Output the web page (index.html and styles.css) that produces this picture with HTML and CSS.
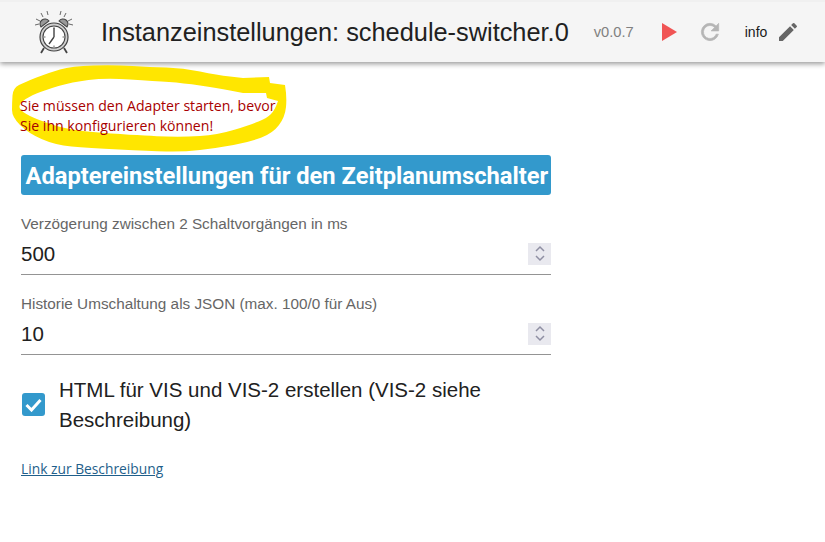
FILE: index.html
```html
<!DOCTYPE html>
<html lang="de">
<head>
    <meta charset="UTF-8">
    <title>Instanzeinstellungen: schedule-switcher.0</title>
    <link rel="stylesheet" href="styles.css">
</head>
<body>
    <header class="toolbar">
        <svg class="logo" width="40" height="44" viewBox="0 0 40 44" fill="none" stroke="#444" stroke-width="1.1">
            <path d="M2 9l4 2M7 3l2 4M13 1l1 4M27 1l-1 4M32 3l-2 4M38 9l-4 2M1 15l4-1M39 15l-4-1" stroke-width="0.8"/>
            <path d="M7 17a5 5 0 0 1 8-6zM33 17a5 5 0 0 0-8-6z" fill="#999"/>
            <circle cx="20" cy="27" r="14" fill="#d0d0d0" stroke-width="1.2"/>
            <circle cx="20" cy="27" r="11" fill="#fff"/>
            <path d="M20 27V18M20 27l-5 7" stroke-width="1.4"/>
            <path d="M20 17v1.500M20 35.500V37M10 27h1.500M28.500 27H30" stroke-width="0.8"/>
            <path d="M10 38l-3 5M30 38l3 5" stroke-width="1.8"/>
        </svg>
        <h1 class="title">Instanzeinstellungen: schedule-switcher.0</h1>
        <span class="version">v0.0.7</span>
        <svg class="icon-play" width="15" height="18" viewBox="0 0 15 18"><path d="M0 0l15 9-15 9z" fill="#f05454"/></svg>
        <svg class="icon-reload" width="26" height="26" viewBox="0 0 24 24"><path d="M17.650 6.350A7.960 7.960 0 0 0 12 4a8 8 0 1 0 7.740 10h-2.080A6 6 0 1 1 12 6c1.660 0 3.140.69 4.220 1.780L13 11h7V4z" fill="#b5b5b5" stroke="#b5b5b5" stroke-width="0.6"/></svg>
        <span class="info">info</span>
        <svg class="icon-edit" width="24" height="24" viewBox="0 0 24 24"><path d="M3 17.250V21h3.750L17.810 9.940l-3.750-3.750zM20.710 7.040a1 1 0 0 0 0-1.410l-2.340-2.340a1 1 0 0 0-1.410 0l-1.830 1.830 3.750 3.750z" fill="#666"/></svg>
    </header>

    <svg class="scribble" width="300" height="160" viewBox="0 0 300 160">
        <path fill="#ffe600" fill-rule="evenodd" d="M270 83L285 85Q287 97 286 107Q285 117 279 125Q273 133 261.500 137.500Q250 142 233.500 145Q217 148 200 150Q183 152 166 151.500Q150 151 119 149.500Q88 148 71.500 146.500Q55 145 41.500 139Q28 133 20 125Q12 117 12 110Q12 103 12.500 95.500Q13 88 19 85Q25 82 36.500 77.500Q48 73 60 69.500Q72 66 93.500 65.500Q115 65 132.500 66Q150 67 166.500 67.500Q183 68 200 71.500Q217 75 230 76.500L243 78L269 77ZM266 93L267 98L278 101Q275 110 271 114Q267 118 258.500 121.500Q250 125 233.500 130Q217 135 200 136Q183 137 166.500 136.500Q150 136 111 133.500Q72 131 55 125.500Q38 120 30 116Q22 112 20 108.500Q18 105 23 101Q28 97 36.500 93.500Q45 90 58.500 86Q72 82 88.500 80Q105 78 130 79.500Q155 81 169 82Q183 83 200 85.500Q217 88 230 90.500L243 93Z"/>
    </svg>

    <main class="content">
        <p class="warning">Sie müssen den Adapter starten, bevor<br>Sie ihn konfigurieren können!</p>

        <h2 class="banner">Adaptereinstellungen für den Zeitplanumschalter</h2>

        <div class="field">
            <label class="field-label">Verzögerung zwischen 2 Schaltvorgängen in ms</label>
            <div class="field-input">
                <span>500</span>
                <span class="spinner">
                    <svg width="10" height="17" viewBox="0 0 10 17" fill="none" stroke="#8f8fa3" stroke-width="1.500"><path d="M1 6l4-4 4 4M1 11l4 4 4-4"/></svg>
                </span>
            </div>
        </div>

        <div class="field">
            <label class="field-label">Historie Umschaltung als JSON (max. 100/0 für Aus)</label>
            <div class="field-input">
                <span>10</span>
                <span class="spinner">
                    <svg width="10" height="17" viewBox="0 0 10 17" fill="none" stroke="#8f8fa3" stroke-width="1.500"><path d="M1 6l4-4 4 4M1 11l4 4 4-4"/></svg>
                </span>
            </div>
        </div>

        <div class="check-row">
            <span class="checkbox">
                <svg width="17" height="14" viewBox="0 0 17 14" fill="none" stroke="#fff" stroke-width="3"><path d="M1.500 7l5 5 9-10"/></svg>
            </span>
            <span class="check-label">HTML für VIS und VIS-2 erstellen (VIS-2 siehe Beschreibung)</span>
        </div>

        <a class="doc-link" href="#">Link zur Beschreibung</a>
    </main>
</body>
</html>
```

FILE: styles.css
```css
body {
    margin: 0;
    background: #fff;
    font-family: "Liberation Sans", Arial, sans-serif;
    color: #212121;
    overflow: hidden;
}
.toolbar {
    display: flex;
    align-items: center;
    height: 62px;
    box-sizing: border-box;
    padding-left: 34px;
    background: #f5f5f5;
    border-top: 2px solid #f0f0f0;
    box-shadow: 0 2px 5px rgba(0,0,0,0.4);
}
.logo {
    flex: none;
}
.title {
    margin: 0 0 0 27px;
    font-size: 25.350px;
    font-weight: 400;
    white-space: nowrap;
}
.version {
    margin-left: 25px;
    font-size: 14.700px;
    color: #808080;
}
.icon-play {
    margin-left: 28px;
}
.icon-reload {
    margin-left: 20px;
}
.info {
    margin-left: 22px;
    font-size: 14px;
    color: #1a1a1a;
}
.icon-edit {
    margin-left: 9px;
}
.scribble {
    position: absolute;
    left: 0;
    top: 0;
}
.content {
    position: relative;
    width: 530px;
    padding: 34px 0 0 21px;
}
.warning {
    margin: 0 0 0 -1px;
    font-family: "Open Sans", sans-serif;
    font-size: 14.100px;
    line-height: 20px;
    color: #a80000;
    white-space: nowrap;
}
.banner {
    margin: 19px 0 0;
    height: 40px;
    padding-left: 4.500px;
    background: #3399cc;
    border-radius: 3px;
    color: #fff;
    font-family: Roboto, sans-serif;
    font-size: 23.700px;
    font-weight: 700;
    line-height: 42px;
    white-space: nowrap;
}
.field {
    margin-top: 20px;
}
.field-label {
    display: block;
    font-size: 15.300px;
    line-height: 18px;
    color: #666;
}
.field-input {
    display: flex;
    align-items: center;
    justify-content: space-between;
    height: 41px;
    border-bottom: 1px solid #949494;
    font-size: 20.500px;
}
.spinner {
    display: flex;
    align-items: center;
    justify-content: center;
    width: 23px;
    height: 22px;
    background: #e9e9ef;
}
.check-row {
    display: flex;
    align-items: center;
    margin-top: 19px;
}
.checkbox {
    display: flex;
    align-items: center;
    justify-content: center;
    flex: none;
    width: 23px;
    height: 23px;
    margin-left: 1px;
    border-radius: 3px;
    background: #3399cc;
}
.check-label {
    margin-left: 14px;
    padding-top: 1px;
    font-size: 20.500px;
    line-height: 30px;
}
.doc-link {
    display: inline-block;
    margin-top: 24px;
    font-family: "Open Sans", sans-serif;
    font-size: 13.800px;
    color: #1f5f8b;
}
```
